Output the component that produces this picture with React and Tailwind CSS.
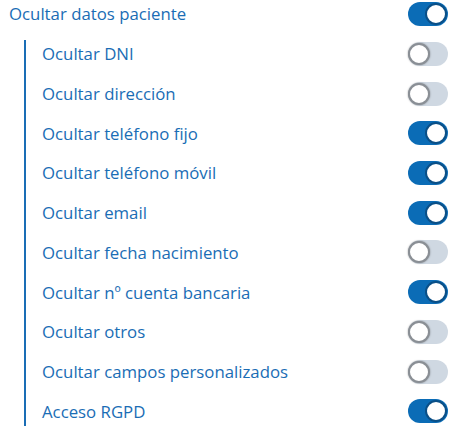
import React from "react";

const items = [
  { label: "Ocultar DNI", on: false },
  { label: "Ocultar dirección", on: false },
  { label: "Ocultar teléfono fijo", on: true },
  { label: "Ocultar teléfono móvil", on: true },
  { label: "Ocultar email", on: true },
  { label: "Ocultar fecha nacimiento", on: false },
  { label: "Ocultar nº cuenta bancaria", on: true },
  { label: "Ocultar otros", on: false },
  { label: "Ocultar campos personalizados", on: false },
  { label: "Acceso RGPD", on: true },
];

const Toggle = ({ on }) => (
  <div
    className={
      on
        ? "relative w-[40px] h-[24px] rounded-full bg-[#0b6cb6]"
        : "relative w-[40px] h-[24px] rounded-full bg-[#cfd8e2]"
    }
  >
    <div
      className={
        on
          ? "absolute top-[1px] right-[1px] w-[22px] h-[22px] rounded-full bg-white border-2 border-[#0a4f87]"
          : "absolute top-[1px] left-[0px] w-[22px] h-[22px] rounded-full bg-white border-2 border-[#8a8f95] shadow-[0_0_2px_rgba(0,0,0,0.4)]"
      }
    ></div>
  </div>
);

export default function App() {
  return (
    <div className="w-[459px] h-[432px] bg-white pl-[9px] pr-[11px] text-[#1a6db5] text-[16.8px] font-['Open_Sans',sans-serif]">
      {/* master switch */}
      <div className="h-[28px] flex items-center justify-between">
        <span>Ocultar datos paciente</span>
        <Toggle on />
      </div>

      {/* sub options */}
      <div className="mt-[12px] ml-[15px] border-l-2 border-[#1a6db5] pl-[16px] pb-[1px] flex flex-col gap-[11.7px]">
        {items.map((it) => (
          <div key={it.label} className="h-[28px] flex items-center justify-between">
            <span>{it.label}</span>
            <Toggle on={it.on} />
          </div>
        ))}
      </div>
    </div>
  );
}
